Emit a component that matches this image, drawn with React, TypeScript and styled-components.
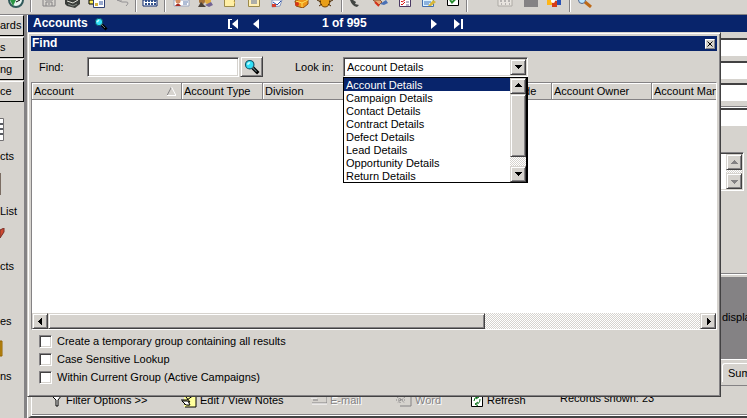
import React from "react";
import styled, { createGlobalStyle, css } from "styled-components";

const face = "#d6d3ce";
const navy = "#08246b";
const shade = "#848284";
const dark = "#424142";

const Global = createGlobalStyle`
  * { box-sizing: border-box; }
  html, body, #root { height: 100%; margin: 0; }
  body { overflow: hidden; background: ${face}; }
  body, button, input, select, textarea { font: 11px/13px "Liberation Sans", Arial, sans-serif; color: #000; }
  button { border: 0; padding: 0; background: ${face}; white-space: nowrap; }
  svg { display: block; flex: none; }
`;

const raised = css`
  border: 1px solid;
  border-color: ${face} ${dark} ${dark} ${face};
  box-shadow: inset 1px 1px #fff, inset -1px -1px ${shade};
`;
const sunken = css`
  border: 1px solid;
  border-color: ${shade} #fff #fff ${shade};
  box-shadow: inset 1px 1px ${dark}, inset -1px -1px ${face};
`;
const dither = css`
  background: repeating-conic-gradient(#fff 0 25%, ${face} 0 50%) 0 0 / 2px 2px;
`;

const Page = styled.div`
  height: 100vh;
  display: flex;
  flex-direction: column;
  overflow: hidden;
`;
const IconBar = styled.header`
  flex: none;
  display: flex;
  align-items: flex-start;
  height: 15px;
  padding-left: 8px;
  border-bottom: 1px solid ${shade};
  overflow: hidden;
`;
const Tool = styled.button<{ $gap?: number }>`
  flex: none;
  width: 18px;
  margin-right: ${(p) => p.$gap ?? 6}px;
`;
const Divider = styled.i<{ $gap?: number }>`
  flex: none;
  height: 12px;
  width: 2px;
  margin-right: ${(p) => p.$gap ?? 6}px;
  border-left: 1px solid ${shade};
  border-right: 1px solid #fff;
`;
const Body = styled.div`
  flex: 1;
  display: flex;
  min-height: 0;
`;
const Sidebar = styled.nav`
  flex: none;
  width: 27px;
  display: flex;
  flex-direction: column;
  border-right: 3px solid ${shade};
  overflow: hidden;
`;
const SideTab = styled.button`
  flex: none;
  height: 21px;
  margin-bottom: 1px;
  text-align: left;
  border-top: 1px solid #fff;
  border-right: 1px solid #000;
  border-bottom: 1px solid #000;
`;
const Shortcuts = styled.div`
  display: flex;
  flex-direction: column;
  padding-top: 15px;
`;
const Shortcut = styled.button`
  height: 55px;
  display: flex;
  flex-direction: column;
  align-items: flex-start;
  gap: 8px;
`;
const Main = styled.main`
  flex: 1;
  min-width: 0;
  display: flex;
  flex-direction: column;
  position: relative;
  border-left: 1px solid #fff;
`;
const RecordBar = styled.div`
  flex: none;
  display: flex;
  align-items: center;
  height: 17px;
  padding-left: 5px;
  background: ${navy};
  color: #fff;
  font-weight: bold;
  font-size: 12px;
`;
const RecordTitle = styled.h1`
  display: flex;
  align-items: center;
  gap: 6px;
  width: 194px;
  margin: 0;
  font-size: 12px;
`;
const NavButton = styled.button<{ $gap?: number }>`
  background: none;
  width: 12px;
  margin-right: ${(p) => p.$gap ?? 0}px;
`;
const Position = styled.span`
  width: 48px;
  margin-right: 60px;
  white-space: nowrap;
`;
const Backdrop = styled.div`
  flex: 1;
  min-height: 0;
  display: flex;
  justify-content: flex-end;
`;
const Form = styled.div`
  width: 32px;
  display: flex;
  flex-direction: column;
  padding-top: 6px;
  overflow: hidden;
`;
const Field = styled.input<{ $gap: number }>`
  flex: none;
  width: 100%;
  height: 18px;
  margin-bottom: ${(p) => p.$gap}px;
  background: #fff;
  border: 0;
  border-top: 2px solid ${dark};
`;
const Groove = styled.hr`
  flex: none;
  width: 100%;
  height: 2px;
  margin: 0;
  border: 0;
  border-top: 1px solid ${shade};
  border-bottom: 1px solid #fff;
`;
const Notes = styled.div`
  ${sunken}
  flex: none;
  height: 39px;
  margin: 23px 3px 82px 0;
  padding: 1px;
  background: #fff;
  display: flex;
  justify-content: flex-end;
`;
const ScrollV = styled.div`
  ${dither}
  width: 16px;
  display: flex;
  flex-direction: column;
  justify-content: space-between;
`;
const Arrow = styled.button`
  ${raised}
  flex: none;
  width: 16px;
  height: 16px;
  display: flex;
  align-items: center;
  justify-content: center;
`;
const Preview = styled.div`
  flex: none;
  height: 81px;
  margin-top: 2px;
  padding: 34px 0 0 7px;
  background: ${shade};
  white-space: nowrap;
`;
const SubTab = styled.button`
  flex: none;
  height: 19px;
  margin: 3px 0 3px 7px;
  padding-left: 5px;
  text-align: left;
  border-top: 1px solid #fff;
  border-left: 1px solid #fff;
  border-radius: 3px 0 0 0;
`;
const StatusBar = styled.footer`
  flex: none;
  display: grid;
  grid-template-columns: 130px 130px 85px 74px 90px 1fr;
  align-items: start;
  height: 32px;
  padding: 6px 0 0 20px;
  border-left: 3px solid ${face};
  border-bottom: 2px solid ${dark};
  box-shadow: inset 1px 0 #fff, inset 0 -1px #fff, inset 0 -2px ${shade};
`;
const StatusItem = styled.button<{ $off?: boolean }>`
  display: flex;
  align-items: center;
  gap: 3px;
  height: 16px;
  ${(p) => p.$off && css`color: ${shade}; text-shadow: 1px 1px #fff;`}
`;
const StatusText = styled.span`
  white-space: nowrap;
`;
const Dialog = styled.section`
  position: absolute;
  inset: 17px 26px 21px -1px;
  display: flex;
  flex-direction: column;
  padding: 3px;
  background: ${face};
  border: 1px solid;
  border-color: ${face} ${dark} ${dark} ${face};
  box-shadow: inset 1px 1px #fff, inset -1px -1px ${shade};
`;
const TitleBar = styled.header`
  flex: none;
  height: 15px;
  display: flex;
  align-items: center;
  justify-content: space-between;
  padding: 0 2px 0 1px;
  background: ${navy};
`;
const Title = styled.h2`
  margin: 0;
  font-size: 12px;
  line-height: 15px;
  color: #fff;
`;
const CloseButton = styled.button`
  width: 10px;
  height: 10px;
  display: grid;
  place-items: center;
  border: 1px solid;
  border-color: #fff ${shade} ${shade} #fff;
`;
const SearchRow = styled.div`
  flex: none;
  height: 31px;
  display: flex;
  align-items: center;
  padding-left: 8px;
`;
const Caption = styled.label<{ $width: number }>`
  width: ${(p) => p.$width}px;
  line-height: 14px;
`;
const FindInput = styled.input`
  ${sunken}
  width: 152px;
  height: 20px;
  padding: 0 4px;
  background: #fff;
  outline: none;
`;
const FindButton = styled.button`
  ${raised}
  width: 23px;
  height: 21px;
  margin: 0 32px 0 1px;
  display: grid;
  place-items: center;
`;
const Combo = styled.div`
  position: relative;
  width: 185px;
`;
const ComboBox = styled.div`
  ${sunken}
  display: flex;
  height: 20px;
  padding: 1px;
  background: #fff;
`;
const Select = styled.select`
  appearance: none;
  flex: 1;
  min-width: 0;
  border: 0;
  padding: 1px 2px 0;
  background: #fff;
  outline: none;
`;
const Menu = styled.div`
  position: absolute;
  z-index: 1;
  top: 100%;
  left: 0;
  right: 0;
  display: flex;
  border: 1px solid #000;
  border-right-width: 2px;
  background: #fff;
`;
const Options = styled.ul`
  flex: 1;
  margin: 0;
  padding: 0;
  list-style: none;
`;
const Option = styled.li`
  padding-left: 2px;
  height: 13px;
  line-height: 15px;
  &[aria-selected="true"] { background: ${navy}; color: #fff; }
`;
const ThumbV = styled.div`
  ${raised}
  height: 63px;
  margin-bottom: auto;
  background: ${face};
`;
const List = styled.div`
  flex: 1;
  min-height: 0;
  display: flex;
  flex-direction: column;
  border: 1px solid;
  border-color: ${shade} #fff #fff ${shade};
  background: #fff;
`;
const Viewport = styled.div`
  flex: 1;
  min-height: 0;
  overflow: hidden;
`;
const Results = styled.table`
  width: 761px;
  table-layout: fixed;
  border-collapse: separate;
  border-spacing: 0;
`;
const Heading = styled.th<{ $width: number }>`
  width: ${(p) => p.$width}px;
  height: 17px;
  padding: 0 2px;
  background: ${face};
  border-right: 1px solid ${shade};
  border-bottom: 1px solid ${shade};
  box-shadow: inset 1px 1px #fff;
  font-weight: normal;
  text-align: left;
  white-space: nowrap;
`;
const SortHeading = styled.span`
  display: flex;
  align-items: center;
  justify-content: space-between;
  padding-right: 3px;
`;
const ScrollH = styled.div`
  ${dither}
  flex: none;
  display: flex;
  height: 16px;
`;
const ThumbH = styled.div`
  ${raised}
  width: 437px;
  margin-right: auto;
  background: ${face};
`;
const Choices = styled.div`
  flex: none;
  display: flex;
  flex-direction: column;
  gap: 5px;
  padding: 5px 8px 9px;
`;
const Choice = styled.label`
  display: flex;
  align-items: center;
  gap: 5px;
`;
const Check = styled.input`
  ${sunken}
  appearance: none;
  width: 13px;
  height: 13px;
  margin: 0;
  background: #fff;
`;

type Dir = "up" | "down" | "left" | "right";
const tri: Record<Dir, string> = {
  up: "M4 2h1v1h1v1h1v1h1v1H1V5h1V4h1V3h1z",
  down: "M1 3h7v1H7v1H6v1H5v1H4V6H3V5H2V4H1z",
  left: "M6 1v7H5V7H4V6H3V5H2V4h1V3h1V2h1V1z",
  right: "M3 1v7h1V7h1V6h1V5h1V4H6V3H5V2H4V1z",
};
const Tri = ({ dir, color = "#000" }: { dir: Dir; color?: string }) => (
  <svg width="9" height="9" shapeRendering="crispEdges"><path d={tri[dir]} fill={color} /></svg>
);
const Lens = ({ size = 14 }: { size?: number }) => (
  <svg width={size} height={size} viewBox="0 0 14 14">
    <path d="M7 7l5.5 5.5" stroke="#000" strokeWidth="3" />
    <circle cx="5" cy="5" r="3.7" fill="#31dff7" stroke="#105568" />
    <path d="M3 5l2-2" stroke="#c8ffff" strokeWidth="1.5" />
    <path d="M7 7l4 4" stroke="#657b80" />
  </svg>
);
const NavIcon = ({ next, end }: { next?: boolean; end?: boolean }) => (
  <svg width="12" height="12" fill="#fff">
    {next ? <path d="M1 1v10l6-5z" /> : <path d="M11 1v10L5 6z" />}
    {end && <path d={next ? "M8 1h2v10H8z" : "M1 1h2v10H1zM3 1h2v1H3zM3 10h2v1H3z"} />}
  </svg>
);

const toolArt: Record<string, React.ReactNode> = {
  clock: <><circle cx="8" cy="0" r="7" fill="#e7f3ef" stroke="#31595a" strokeWidth="2" /><path d="M2 0h6l-3 6z" fill="#299642" /><path d="M8 2l4-2" stroke="#000" /></>,
  save: <path d="M2 0v6h12V0M5 6V2h6v4M8 3v2M4 0h8" fill="none" stroke="#848284" />,
  print: <><path d="M1 0h15v4l-5 4-8-2-2-2z" fill="#393c39" /><path d="M3 1l6 2 5-3" stroke="#deded6" fill="none" /><path d="M4 4l5 2 4-2" stroke="#848a84" fill="none" /></>,
  cards: <><path d="M1 0h8v4H1z" fill="#ffef52" stroke="#000" /><path d="M5.5 0v7.500h11V0" fill="#fff" stroke="#314173" /><path d="M7 3h3v3H7z" fill="#d6b642" /><path d="M11 2h4M11 4h4" stroke="#31519c" /></>,
  undo: <path d="M3 0l5 2h4q4 0 0 4M3 0h5" fill="none" stroke="#949294" strokeWidth="1" />,
  grid: <><path d="M1 0h14v6H1z" fill="#fff" stroke="#08246b" strokeWidth="1" /><path d="M4 0v5M7 0v5M10 0v5M13 0v5" stroke="#31518c" strokeDasharray="2 1" strokeWidth="2" /></>,
  person: <><path d="M1 0h15v6H1z" fill="#fff" stroke="#9ca6bd" /><circle cx="5" cy="1" r="2.500" fill="#d68e63" /><path d="M2 6q3-5 6 0z" fill="#a52821" /><path d="M10 2h5M10 4h4" stroke="#637dad" /></>,
  people: <><circle cx="5" cy="1" r="3" fill="#a5713a" /><path d="M1 7l3-5 5 5z" fill="#4a4139" /><circle cx="11" cy="1" r="3" fill="#deaa42" /><path d="M8 5l6-3 2 3-4 2z" fill="#736594" /></>,
  page: <><path d="M3.500 0v6.500h10V0" fill="#ffefa5" stroke="#9c8a4a" /><path d="M12 1l2 1v2" fill="#efc75a" /></>,
  lines: <><path d="M3.500 0v6.500h11V0" fill="#ffefb5" stroke="#9c8a4a" /><path d="M6 1h6M6 3h6" stroke="#5a6d9c" /></>,
  letter: <><path d="M3 0h10l-2 6-8 1z" fill="#fff" stroke="#8496bd" /><path d="M4 2l4 3 4-4" stroke="#2949a5" fill="none" /><path d="M3 4h4v3H3z" fill="#d64131" /></>,
  box: <><path d="M2 1l5-2 8 1v4l-5 4-7-2z" fill="#ef9618" stroke="#8c4d10" /><path d="M3 1l6 2v4M9 3l6-3" stroke="#ffdf5a" fill="none" /><circle cx="4" cy="4" r="2" fill="#d63418" /></>,
  bug: <><ellipse cx="8" cy="1" rx="5" ry="6" fill="#e79e18" stroke="#734100" /><path d="M0 0l4 2M16 0l-4 2M2 6l3-2M14 6l-3-2" stroke="#4a2800" /></>,
  phone: <path d="M2 0q2 6 7 7l2-2-4-1 1-2-3-2z" fill="#424542" />,
  hands: <><path d="M1 0l6 5 3-3-2-2z" fill="#e7a673" stroke="#8c5939" /><path d="M8 4l6-4 2 3-4 2z" fill="#4a71b5" /><path d="M3 2l4 4" stroke="#d63018" strokeWidth="2" /></>,
  checks: <><path d="M3.500 0v6.500h11V0" fill="#fff" stroke="#4a3963" /><path d="M5 1l1 1 3-2M5 4l1 1 3-3" stroke="#d61818" fill="none" /><path d="M10 2h3M10 5h3" stroke="#736d94" /></>,
  edit: <><path d="M2.500 0v6.500h11V0" fill="#def3ff" stroke="#426dad" /><path d="M4 2h7M4 4h5" stroke="#3971bd" /><path d="M8 6l5-6 3 2-5 4z" fill="#d6b639" /></>,
  tick: <><path d="M3.500 0v5.500h11V0" fill="#fff" stroke="#000" /><path d="M6 0l2 2.500 4-4" stroke="#298e31" strokeWidth="2" fill="none" /></>,
  calendar: <><path d="M1 0v6h14V0" fill="#e7e3de" stroke="#adaaa5" /><path d="M4 0v2M8 0v2M12 0v2M4 4h1M8 4h1M12 4h1" stroke="#848284" /></>,
  block: <path d="M1 0h14v7H1z" fill="#848284" />,
  office: <><path d="M1 0h5v5H1z" fill="#ffb618" /><path d="M6 1h5v6H6z" fill="#d63c18" /><path d="M11 0h4v5h-4z" fill="#2951b5" /><circle cx="7" cy="1" r="2" fill="#fff" /></>,
  search: <><circle cx="5" cy="0" r="3.500" fill="#bde7ff" stroke="#52658c" /><path d="M8 2l6 5" stroke="#bd6918" strokeWidth="3" /></>,
};

const Art = ({ name }: { name: string }) => <svg width="18" height="8">{toolArt[name]}</svg>;

const tools: ([string, number] | number)[] = [
  ["clock", 4], 9, ["save", 5], ["print", 6], ["cards", 8], ["undo", 3], 5,
  ["grid", 4], 7, ["person", 6], ["people", 6], ["page", 6], ["lines", 6],
  ["letter", 6], ["box", 6], ["bug", 6], 5, ["phone", 6], ["hands", 6],
  ["checks", 6], ["edit", 6], ["tick", 4], 29, ["calendar", 8], ["block", 5],
  ["office", 5], 6, ["search", 0],
];

const lookups = ["Account Details", "Campaign Details", "Contact Details", "Contract Details",
  "Defect Details", "Lead Details", "Opportunity Details", "Return Details"];
const columns: [string, number][] = [["Account Type", 81], ["Division", 130], ["", 115], ["Code", 44], ["Account Owner", 100], ["Account Manager", 141]];

const shortcuts: [string, React.ReactNode][] = [
  ["cts", <><path d="M0 .5h3.500v22H0" fill="#fff" stroke="#737173" /><path d="M0 6h3M0 11h3M0 16h3" stroke="#5a5d63" strokeWidth="2" /></>],
  ["List", <path d="M0 0h1v22H0z" fill="#7b6d63" />],
  ["cts", <path d="M0 2l4-2v4l-4 6z" fill="#ce4931" stroke="#7b3029" />],
  ["es", null],
  ["ns", <path d="M0 3h2v15H0z" fill="#c69218" stroke="#946500" />],
];

export default function App() {
  return (
    <Page>
      <Global />
      <IconBar>
        {tools.map((t, i) => typeof t === "number"
          ? <Divider key={i} $gap={t} />
          : <Tool key={i} $gap={t[1]} aria-label={t[0]}><Art name={t[0]} /></Tool>)}
      </IconBar>
      <Body>
        <Sidebar>
          {["ards", "s", "ng", "ce"].map((t) => <SideTab key={t}>{t}</SideTab>)}
          <Shortcuts>
            {shortcuts.map(([label, art], i) => (
              <Shortcut key={i}><svg width="6" height="24">{art}</svg>{label}</Shortcut>
            ))}
          </Shortcuts>
        </Sidebar>
        <Main>
          <RecordBar>
            <RecordTitle>Accounts <Lens /></RecordTitle>
            <NavButton $gap={9} aria-label="First"><NavIcon end /></NavButton>
            <NavButton $gap={62} aria-label="Previous"><NavIcon /></NavButton>
            <Position>1 of 995</Position>
            <NavButton $gap={11} aria-label="Next"><NavIcon next /></NavButton>
            <NavButton aria-label="Last"><NavIcon next end /></NavButton>
          </RecordBar>
          <Backdrop>
            <Form>
              <Field $gap={5} aria-label="Field 1" />
              <Field $gap={4} aria-label="Field 2" />
              <Field $gap={5} aria-label="Field 3" />
              <Groove />
              <Field $gap={3} aria-label="Field 4" />
              <Notes>
                <ScrollV>
                  <Arrow aria-label="Up"><Tri dir="up" color={shade} /></Arrow>
                  <Arrow aria-label="Down"><Tri dir="down" color={shade} /></Arrow>
                </ScrollV>
              </Notes>
              <Groove />
              <Preview>displa</Preview>
              <Groove />
              <SubTab>Sum</SubTab>
              <Groove />
            </Form>
          </Backdrop>
          <StatusBar>
            <StatusItem>
              <svg width="12" height="14"><path d="M.5 2.500h10L7 7v6H5V7z" fill="#fff" stroke="#000" /></svg>
              Filter Options &gt;&gt;
            </StatusItem>
            <StatusItem>
              <svg width="16" height="15"><path d="M3 1h12v13H3z" fill="#ffff9c" /><path d="M15 2v12H4" stroke="#000" fill="none" /><path d="M0 7h6l7-5M2 9h7M3 11l5 1M5 4l4 5" stroke="#000" fill="none" /><path d="M1 8h6l2 4H5z" fill="#fff" stroke="#000" /></svg>
              Edit / View Notes
            </StatusItem>
            <StatusItem $off disabled>
              <svg width="16" height="14"><path d="M0 4h6M2 7h5M1 10h15V1" fill="none" stroke={shade} /><path d="M1 11h15M0 5h6" stroke="#fff" /></svg>
              E-mail
            </StatusItem>
            <StatusItem $off disabled>
              <svg width="16" height="14"><path d="M1 4l8 6M9 4l-8 6M4 3v8M0 7h10" stroke={shade} strokeDasharray="1 1" /><path d="M4 13h11V1" fill="none" stroke={shade} /></svg>
              Word
            </StatusItem>
            <StatusItem>
              <svg width="14" height="15"><path d="M1.500 13.500V1.500h11v12z" fill="#fff" stroke="#000" /><path d="M4 8q0-4 4-4M6 2l3 2-3 2M10 6q0 5-4 5M8 9l-3 2 3 2" stroke="#087118" fill="none" /></svg>
              Refresh
            </StatusItem>
            <StatusText>Records shown: 23</StatusText>
          </StatusBar>
          <Dialog role="dialog" aria-label="Find">
            <TitleBar>
              <Title>Find</Title>
              <CloseButton aria-label="Close">
                <svg width="6" height="6"><path d="M.5 .5l5 5M5.500 .5l-5 5" stroke="#000" /></svg>
              </CloseButton>
            </TitleBar>
            <SearchRow>
              <Caption htmlFor="find" $width={48}>Find:</Caption>
              <FindInput id="find" />
              <FindButton aria-label="Search"><Lens size={16} /></FindButton>
              <Caption htmlFor="look" $width={48}>Look in:</Caption>
              <Combo>
                <ComboBox>
                  <Select id="look" defaultValue={lookups[0]}>
                    {lookups.map((l) => <option key={l}>{l}</option>)}
                  </Select>
                  <Arrow aria-label="Open list"><Tri dir="down" /></Arrow>
                </ComboBox>
                <Menu>
                  <Options role="listbox" aria-label="Look in">
                    {lookups.map((l, i) => <Option key={l} role="option" aria-selected={i === 0}>{l}</Option>)}
                  </Options>
                  <ScrollV>
                    <Arrow aria-label="Scroll up"><Tri dir="up" /></Arrow>
                    <ThumbV />
                    <Arrow aria-label="Scroll down"><Tri dir="down" /></Arrow>
                  </ScrollV>
                </Menu>
              </Combo>
            </SearchRow>
            <List>
              <Viewport>
                <Results>
                  <thead>
                    <tr>
                      <Heading $width={150}>
                        <SortHeading>Account
                          <svg width="9" height="9"><path d="M4.500 0L0 8.500" stroke={shade} /><path d="M4.500 0L9 8.500H0" fill="none" stroke="#fff" /></svg>
                        </SortHeading>
                      </Heading>
                      {columns.map(([label, width], i) => <Heading key={i} $width={width}>{label}</Heading>)}
                    </tr>
                  </thead>
                </Results>
              </Viewport>
              <ScrollH>
                <Arrow aria-label="Scroll left"><Tri dir="left" /></Arrow>
                <ThumbH />
                <Arrow aria-label="Scroll right"><Tri dir="right" /></Arrow>
              </ScrollH>
            </List>
            <Choices>
              {["Create a temporary group containing all results", "Case Sensitive Lookup", "Within Current Group (Active Campaigns)"].map((t) => (
                <Choice key={t}><Check type="checkbox" />{t}</Choice>
              ))}
            </Choices>
          </Dialog>
        </Main>
      </Body>
    </Page>
  );
}
